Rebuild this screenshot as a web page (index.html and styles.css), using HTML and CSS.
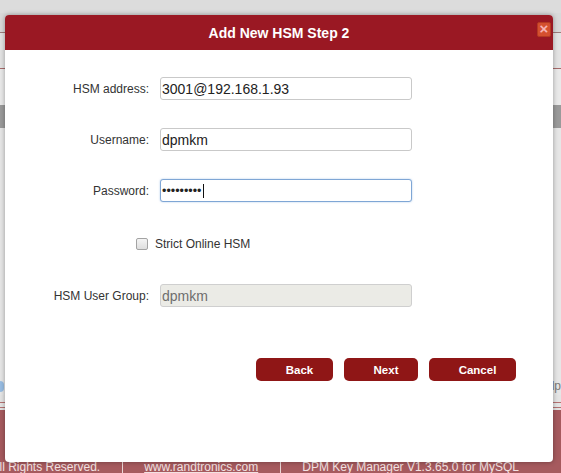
FILE: index.html
```html
<!DOCTYPE html>
<html lang="en">
<head>
<meta charset="utf-8">
<title>Add New HSM Step 2</title>
<link rel="stylesheet" href="styles.css">
</head>
<body>
<div class="app">
  <div class="app-top"></div>
  <div class="app-nav"></div>
  <div class="app-menu"></div>
  <div class="app-sub"></div>
  <div class="app-toolbar"></div>
  <div class="app-main"></div>
  <div class="app-status">
    <span class="status-dot"></span>
    <span class="status-link">Help</span>
  </div>
  <div class="app-rule"></div>
  <div class="app-rule app-rule-second"></div>
  <footer class="app-footer">
    <span class="footer-item">© 2019 Randtronics. All Rights Reserved.</span>
    <a class="footer-item footer-link">www.randtronics.com</a>
    <span class="footer-item">DPM Key Manager V1.3.65.0 for MySQL</span>
  </footer>
</div>

<div class="dialog">
  <div class="dialog-header">
    <span class="dialog-title">Add New HSM Step 2</span>
    <span class="dialog-close">×</span>
  </div>
  <form class="form">
    <div class="field">
      <label class="field-label">HSM address:</label>
      <input class="field-input" type="text" value="3001@192.168.1.93">
    </div>
    <div class="field field-gap">
      <label class="field-label">Username:</label>
      <input class="field-input" type="text" value="dpmkm">
    </div>
    <div class="field field-gap">
      <label class="field-label">Password:</label>
      <span class="pw-wrap">
        <input class="field-input field-input-focused pw" type="password" value="dpmkm1234">
        <span class="caret"></span>
      </span>
    </div>
    <div class="check-row">
      <input class="check" type="checkbox">
      <span class="check-label">Strict Online HSM</span>
    </div>
    <div class="field field-group">
      <label class="field-label">HSM User Group:</label>
      <input class="field-input" type="text" value="dpmkm" disabled>
    </div>
    <div class="actions">
      <button type="button" class="btn btn-back">Back</button>
      <button type="button" class="btn btn-next">Next</button>
      <button type="button" class="btn btn-cancel">Cancel</button>
    </div>
  </form>
</div>
</body>
</html>
```
FILE: styles.css
```css
* { box-sizing: border-box; }

html, body {
  margin: 0;
  padding: 0;
}

body {
  width: 561px;
  height: 473px;
  overflow: hidden;
  position: relative;
  background: #e4e4e4;
  font-family: "Liberation Sans", Arial, sans-serif;
}

/* background application, dimmed behind the modal */
.app {
  display: flex;
  flex-direction: column;
  height: 473px;
}
.app-top { height: 13px; background: #dcdcdc; flex: none; }
.app-nav { height: 20px; background: #d9d9d9; border-bottom: 1px solid #9c7c7c; flex: none; }
.app-menu { height: 36px; background: #e3e3e3; border-bottom: 1px solid #a66a6a; flex: none; }
.app-sub { height: 36px; background: #e9e9e9; flex: none; }
.app-toolbar { height: 23px; background: #9a9a9a; flex: none; }
.app-main { height: 250px; background: #e6e6e6; flex: none; }

.app-status {
  height: 17px;
  display: flex;
  align-items: center;
  justify-content: space-between;
  background: #e6e6e6;
  flex: none;
}
.status-dot {
  width: 4px;
  height: 11px;
  background: #98bde3;
  border-radius: 0 6px 6px 0;
}
.status-link {
  font-size: 12px;
  color: #7a7a7a;
  line-height: 17px;
}

.app-rule {
  height: 1px;
  margin-top: 7px;
  background: #b57272;
  flex: none;
}
.app-rule-second { margin-top: 4px; }

.app-footer {
  margin-top: 2px;
  flex: 1;
  background: #a65a5e;
  display: flex;
  justify-content: flex-end;
  align-items: flex-start;
  padding: 50px 42px 0 0;
  white-space: nowrap;
  font-size: 12px;
  line-height: 14px;
  color: #f2e2e2;
}
.footer-item {
  flex: none;
  padding: 0 22px 0 21px;
  border-left: 1px solid #ead6d6;
}
.footer-item:first-child { border-left: none; }
.footer-item:last-child { padding-right: 0; }
.footer-link { text-decoration: underline; color: #f2e2e2; }

/* modal dialog */
.dialog {
  position: absolute;
  left: 5px;
  top: 15px;
  width: 548px;
  height: 447px;
  background: #fff;
  border-radius: 4px;
  box-shadow: 0 0 5px rgba(0, 0, 0, 0.35);
  display: flex;
  flex-direction: column;
}

.dialog-header {
  position: relative;
  height: 35px;
  flex: none;
  background: #9a1823;
  border-radius: 4px 4px 0 0;
  display: flex;
  align-items: center;
  justify-content: center;
}
.dialog-title {
  color: #fff;
  font-weight: bold;
  font-size: 14px;
}
.dialog-close {
  position: absolute;
  right: 2px;
  top: 7px;
  width: 14px;
  height: 15px;
  background: #d4502f;
  border: 1px solid #b53a22;
  border-radius: 2px;
  color: #f6b3b3;
  font-size: 15px;
  font-weight: bold;
  line-height: 12px;
  text-align: center;
}

.form {
  display: flex;
  flex-direction: column;
  padding-top: 27px;
}

.field {
  display: flex;
  align-items: center;
  height: 23px;
}
.field-gap { margin-top: 28px; }
.field-group { margin-top: 34px; }

.field-label {
  width: 144px;
  margin-right: 11px;
  text-align: right;
  font-size: 12px;
  color: #333;
}

.field-input {
  width: 252px;
  height: 23px;
  margin: 0;
  padding: 0 1px;
  border: 1px solid #c9c9c9;
  border-radius: 3px;
  font-family: "Liberation Sans", Arial, sans-serif;
  font-size: 14px;
  color: #222;
  background: #fff;
  outline: none;
}
.field-input:disabled {
  background: #ebebe6;
  border-color: #cfcfcf;
  color: #6e6e6e;
}
.field-input-focused {
  border-color: #7fa6d5;
  box-shadow: 0 0 2px rgba(110, 160, 215, 0.6);
}

.pw-wrap {
  position: relative;
  display: block;
  height: 23px;
}
.pw { font-size: 12.5px; letter-spacing: 0; }
.caret {
  position: absolute;
  left: 43px;
  top: 5px;
  width: 1px;
  height: 14px;
  background: #111;
}

.check-row {
  display: flex;
  align-items: center;
  height: 12px;
  margin-top: 36px;
  padding-left: 131px;
}
.check {
  appearance: none;
  -webkit-appearance: none;
  width: 12px;
  height: 12px;
  margin: 0 7px 0 0;
  border: 1px solid #a3a3a3;
  border-radius: 2px;
  background: linear-gradient(#f4f4f4, #dedede);
}
.check-label {
  font-size: 12px;
  color: #333;
}

.actions {
  display: flex;
  justify-content: flex-end;
  gap: 11px;
  margin-top: 51px;
  padding-right: 37px;
}
.btn {
  height: 23px;
  padding: 0 0 0 10px;
  border: none;
  border-radius: 5px;
  background: #8f1616;
  color: #fff;
  font-family: "Liberation Sans", Arial, sans-serif;
  font-weight: bold;
  font-size: 11.5px;
  text-align: center;
}
.btn-back { width: 77px; }
.btn-next { width: 74px; }
.btn-cancel { width: 87px; }
```
